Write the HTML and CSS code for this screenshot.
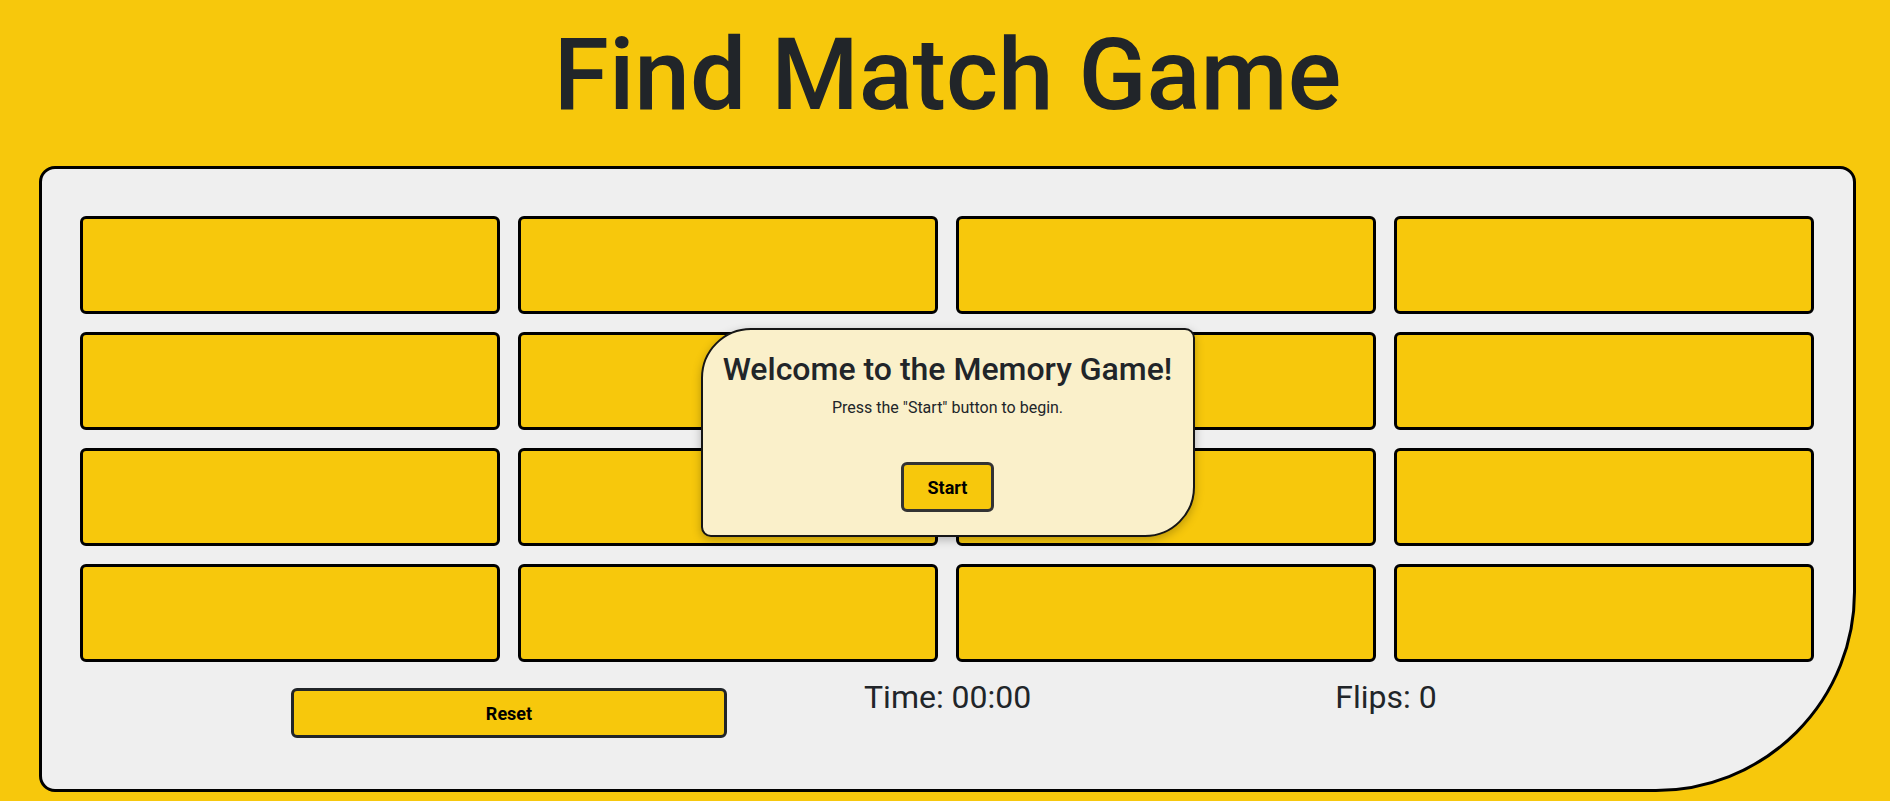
FILE: index.html
```html
<!DOCTYPE html>
<html lang="en">
<head>
<meta charset="utf-8">
<title>Find Match Game</title>
<link rel="stylesheet" href="styles.css">
</head>
<body>
<div class="page">
  <h1 class="title">Find Match Game</h1>
  <div class="board">
    <div class="grid">
      <div class="card"></div><div class="card"></div><div class="card"></div><div class="card"></div>
      <div class="card"></div><div class="card"></div><div class="card"></div><div class="card"></div>
      <div class="card"></div><div class="card"></div><div class="card"></div><div class="card"></div>
      <div class="card"></div><div class="card"></div><div class="card"></div><div class="card"></div>
    </div>
    <div class="footer">
      <button class="btn reset">Reset</button>
      <span class="stat time">Time: 00:00</span>
      <span class="stat flips">Flips: 0</span>
    </div>
    <div class="modal">
      <h2 class="modal-title">Welcome to the Memory Game!</h2>
      <p class="modal-text">Press the "Start" button to begin.</p>
      <button class="btn start">Start</button>
    </div>
  </div>
</div>
</body>
</html>
```
FILE: styles.css
```css
* { box-sizing: border-box; }

html, body {
  margin: 0;
  background: #f7c80c;
  font-family: Roboto, "Liberation Sans", sans-serif;
  color: #212529;
}

.page {
  padding: 0 34px 0 39px;
}

.title {
  margin: 14px 0 31px;
  font-size: 100px;
  font-weight: 500;
  line-height: 121px;
  text-align: center;
  color: #212529;
}

.board {
  position: relative;
  background: #efefef;
  border: 3px solid #000;
  border-radius: 16px 16px 200px 16px;
  padding: 47px 39px 51px 38px;
}

.grid {
  display: grid;
  grid-template-columns: repeat(4, 1fr);
  gap: 18px;
}

.card {
  height: 98px;
  background: #f7c80c;
  border: 3px solid #000;
  border-radius: 6px;
}

.footer {
  display: flex;
  align-items: flex-start;
  margin-top: 16px;
}

.btn {
  background: #f7c80c;
  font-family: Roboto, "Liberation Sans", sans-serif;
  font-size: 18px;
  font-weight: 700;
  color: #000;
  border-radius: 6px;
  padding: 0;
  cursor: pointer;
}

.reset {
  margin-left: 211px;
  margin-top: 10px;
  width: 436px;
  height: 50px;
  border: 3px solid #212529;
}

.stat {
  font-size: 32px;
  line-height: 38px;
  color: #212529;
}

.time {
  margin-left: 137px;
}

.flips {
  margin-left: 304px;
}

.modal {
  position: absolute;
  top: 159px;
  left: 50%;
  transform: translateX(-50%);
  width: 494px;
  background: #faf0ca;
  border: 2px solid #151515;
  border-radius: 50px 10px 50px 10px;
  padding: 20px 20px 23px;
  text-align: center;
  box-shadow: 0 3px 10px rgba(0, 0, 0, 0.25);
}

.modal-title {
  margin: 0 0 8px;
  font-size: 32px;
  font-weight: 500;
  line-height: 38px;
  white-space: nowrap;
}

.modal-text {
  margin: 0 0 42px;
  font-size: 16px;
  line-height: 24px;
}

.start {
  width: 93px;
  height: 50px;
  border: 3px solid #333;
}
```
